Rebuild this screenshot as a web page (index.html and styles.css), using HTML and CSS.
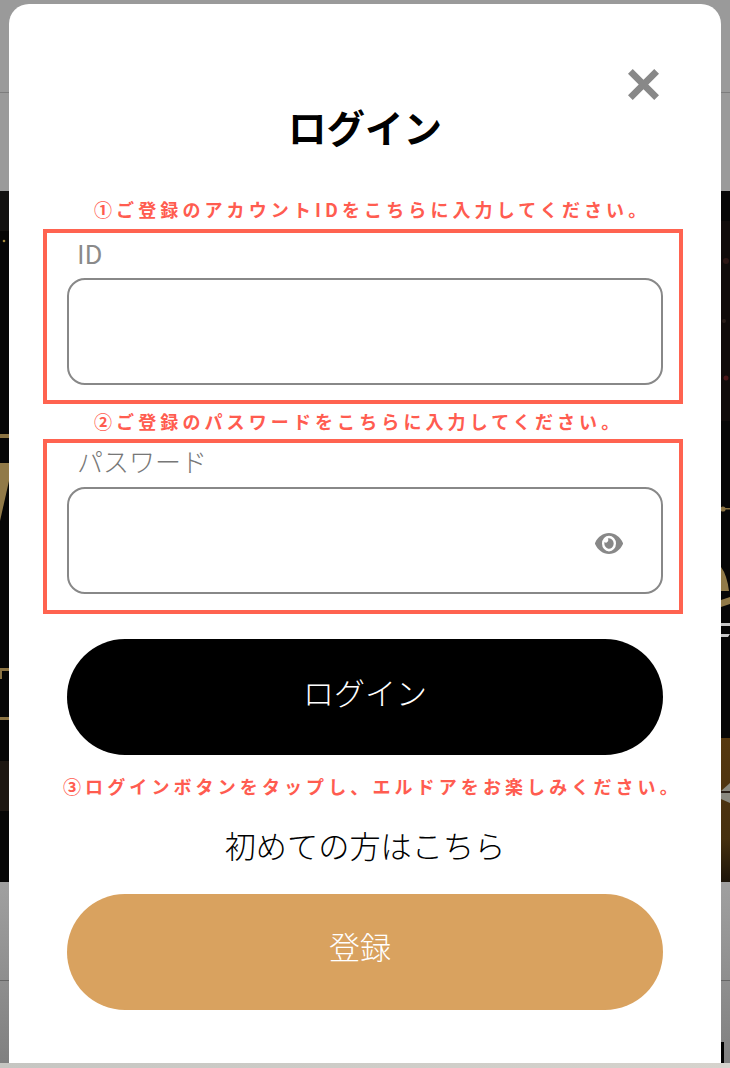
FILE: index.html
```html
<!DOCTYPE html>
<html lang="ja">
<head>
<meta charset="utf-8">
<title>ログイン</title>
<link rel="stylesheet" href="styles.css">
</head>
<body>
<div class="page">
  <div class="top-band"><div class="top-line"></div></div>
  <svg class="hero" viewBox="0 0 730 691" aria-hidden="true">
    <defs>
      <linearGradient id="brown" x1="0" y1="0" x2="0" y2="1">
        <stop offset="0" stop-color="#56380f"/>
        <stop offset="0.7" stop-color="#46300f"/>
        <stop offset="1" stop-color="#1c1409"/>
      </linearGradient>
    </defs>
    <rect width="730" height="691" fill="#060606"/>
    <rect x="0" y="0" width="9" height="40" fill="#121110"/>
    <circle cx="4" cy="50" r="1.3" fill="#a58a3c"/>
    <rect x="0" y="243" width="9" height="4" fill="#8c7443"/>
    <polygon points="0,272 9,272 9,290 0,330" fill="#917a48"/>
    <rect x="0" y="477" width="9" height="3" fill="#8c7443"/>
    <rect x="0" y="480" width="2" height="8" fill="#8c7443"/>
    <rect x="0" y="526" width="9" height="3" fill="#8c7443"/>
    <rect x="0" y="570" width="9" height="50" fill="#1d1712"/>
    <rect x="721" y="30" width="9" height="200" fill="#100b0a"/>
    <circle cx="726" cy="70" r="3" fill="#2c1614"/>
    <circle cx="724" cy="130" r="2" fill="#2a1e1a"/>
    <circle cx="726" cy="187" r="2.5" fill="#4a1618"/>
    <rect x="721" y="317" width="9" height="1.5" fill="#8c7443"/>
    <circle cx="723" cy="318" r="2.6" fill="#8c7443"/>
    <path d="M721 376 q6 8 8 24 h-8z M721 409 l9 -3 v7 l-9 3z" fill="#917a48"/>
    <path d="M721 432 h9 v3 h-9z M721 443 h9 l-2 3 h-7z" fill="#c8c8c8"/>
    <rect x="721" y="547" width="9" height="144" fill="url(#brown)"/>
    <polygon points="721,600 730,592 730,612 721,608" fill="#8a8a80"/>
    <rect x="721" y="600" width="9" height="2" fill="#2a2018"/>
  </svg>
  <div class="lower-band">
    <div class="lower-line"></div>
    <div class="lower-mark"></div>
  </div>
  <div class="bottom-strip"></div>

  <main class="modal">
    <button class="close" type="button" aria-label="閉じる">
      <svg viewBox="0 0 30 30" width="31" height="31"><polygon fill="#888888" points="4.6,0 15,10.4 25.4,0 30,4.6 19.6,15 30,25.4 25.4,30 15,19.6 4.6,30 0,25.4 10.4,15 0,4.6"/></svg>
    </button>
    <h1 class="title">ログイン</h1>

    <p class="note note-first">①ご登録のアカウントIDをこちらに入力してください。</p>
    <section class="group">
      <label class="label label-id" for="id">ID</label>
      <div class="field"><input id="id" class="input" type="text"></div>
    </section>

    <p class="note note-second">②ご登録のパスワードをこちらに入力してください。</p>
    <section class="group">
      <label class="label label-pw" for="pw">パスワード</label>
      <div class="field">
        <input id="pw" class="input" type="password">
        <svg class="eye" viewBox="0 64 576 384" preserveAspectRatio="none" aria-hidden="true"><path fill="#888888" d="M572.52 241.4C518.29 135.59 410.93 64 288 64S57.68 135.64 3.48 241.41a32.4 32.4 0 0 0 0 29.19C57.71 376.41 165.07 448 288 448s230.32-71.64 284.52-177.41a32.4 32.4 0 0 0 0-29.19zM288 400a144 144 0 1 1 144-144 143.93 143.93 0 0 1-144 144zm0-240a95.31 95.31 0 0 0-25.31 3.79 47.85 47.85 0 0 1-66.9 66.9A95.78 95.78 0 1 0 288 160z"/></svg>
      </div>
    </section>

    <button class="btn btn-login" type="button">ログイン</button>
    <p class="note note-third">③ログインボタンをタップし、エルドアをお楽しみください。</p>
    <p class="first-time">初めての方はこちら</p>
    <button class="btn btn-register" type="button">登録</button>
  </main>
</div>
</body>
</html>
```

FILE: styles.css
```css
* { box-sizing: border-box; }

html, body {
  margin: 0;
  padding: 0;
}

body {
  font-family: "Noto Sans CJK JP", "Noto Sans", sans-serif;
  background: #8f8f8f;
}

.page {
  position: relative;
  width: 730px;
  height: 1068px;
  overflow: hidden;
}

.top-band {
  height: 191px;
  padding-top: 92px;
  background: #9a9a9a;
}

.top-line {
  height: 1px;
  background: #7d7d7d;
}

.hero {
  display: block;
  width: 730px;
  height: 691px;
}

.lower-band {
  height: 181px;
  padding-top: 98px;
  display: flex;
  flex-direction: column;
  background: linear-gradient(#a0a0a0, #808080);
}

.lower-line {
  height: 1px;
  background: #666666;
}

.lower-mark {
  width: 3px;
  height: 22px;
  margin-top: 61px;
  margin-left: 721px;
  background: #000000;
}

.bottom-strip {
  height: 5px;
  background: linear-gradient(90deg, #c6c6c2, #d6d3cd);
}

.modal {
  position: absolute;
  left: 9px;
  top: 4px;
  width: 712px;
  height: 1059px;
  padding: 92px 0 0 34px;
  background: #ffffff;
  border-radius: 20px 20px 0 0;
}

.close {
  position: absolute;
  left: 619px;
  top: 65px;
  width: 31px;
  height: 31px;
  padding: 0;
  border: 0;
  background: none;
}

.close svg { display: block; }

.title {
  margin: 0 0 42px -34px;
  height: 60px;
  font-size: 38.5px;
  line-height: 60px;
  font-weight: 700;
  text-align: center;
  color: #000000;
}

.note {
  height: 24px;
  margin: 0;
  font-size: 18px;
  line-height: 22px;
  font-weight: 700;
  letter-spacing: 4.1px;
  white-space: nowrap;
  color: #ff5c50;
}

.note-first { margin-left: 51px; margin-bottom: 7px; }
.note-second { margin-left: 51px; margin-top: 6px; margin-bottom: 5px; }
.note-third { margin-left: 20px; margin-top: 20px; }

.group {
  width: 640px;
  height: 175px;
  padding: 0 16px 0 20px;
  border: 4px solid #ff6350;
}

.label {
  display: block;
  padding-left: 10px;
  font-size: 26px;
}

.label-id {
  height: 45px;
  line-height: 40px;
  font-weight: 400;
  color: #8a8a8a;
}

.label-pw {
  height: 44px;
  line-height: 36px;
  font-weight: 300;
  color: #777777;
}

.field {
  display: flex;
  align-items: center;
  width: 596px;
  height: 107px;
  padding: 0 38px 0 0;
  border: 2px solid #888888;
  border-radius: 18px;
}

.input {
  flex: 1;
  min-width: 0;
  height: 100%;
  border: 0;
  outline: 0;
  background: none;
}

.eye {
  width: 28px;
  height: 21px;
  margin-top: 5px;
}

.btn {
  display: block;
  width: 596px;
  height: 116px;
  margin-left: 24px;
  padding: 0 0 12px;
  border: 0;
  border-radius: 58px;
  font-family: inherit;
  font-size: 31px;
  font-weight: 300;
  color: #ffffff;
}

.btn-login {
  margin-top: 25px;
  background: #000000;
}

.btn-register {
  margin-top: 28px;
  padding-right: 10px;
  background: #d9a25f;
}

.first-time {
  height: 42px;
  margin: 24.5px 0 0 -34px;
  font-size: 31.2px;
  line-height: 42px;
  font-weight: 300;
  text-align: center;
  color: #000000;
}
```
